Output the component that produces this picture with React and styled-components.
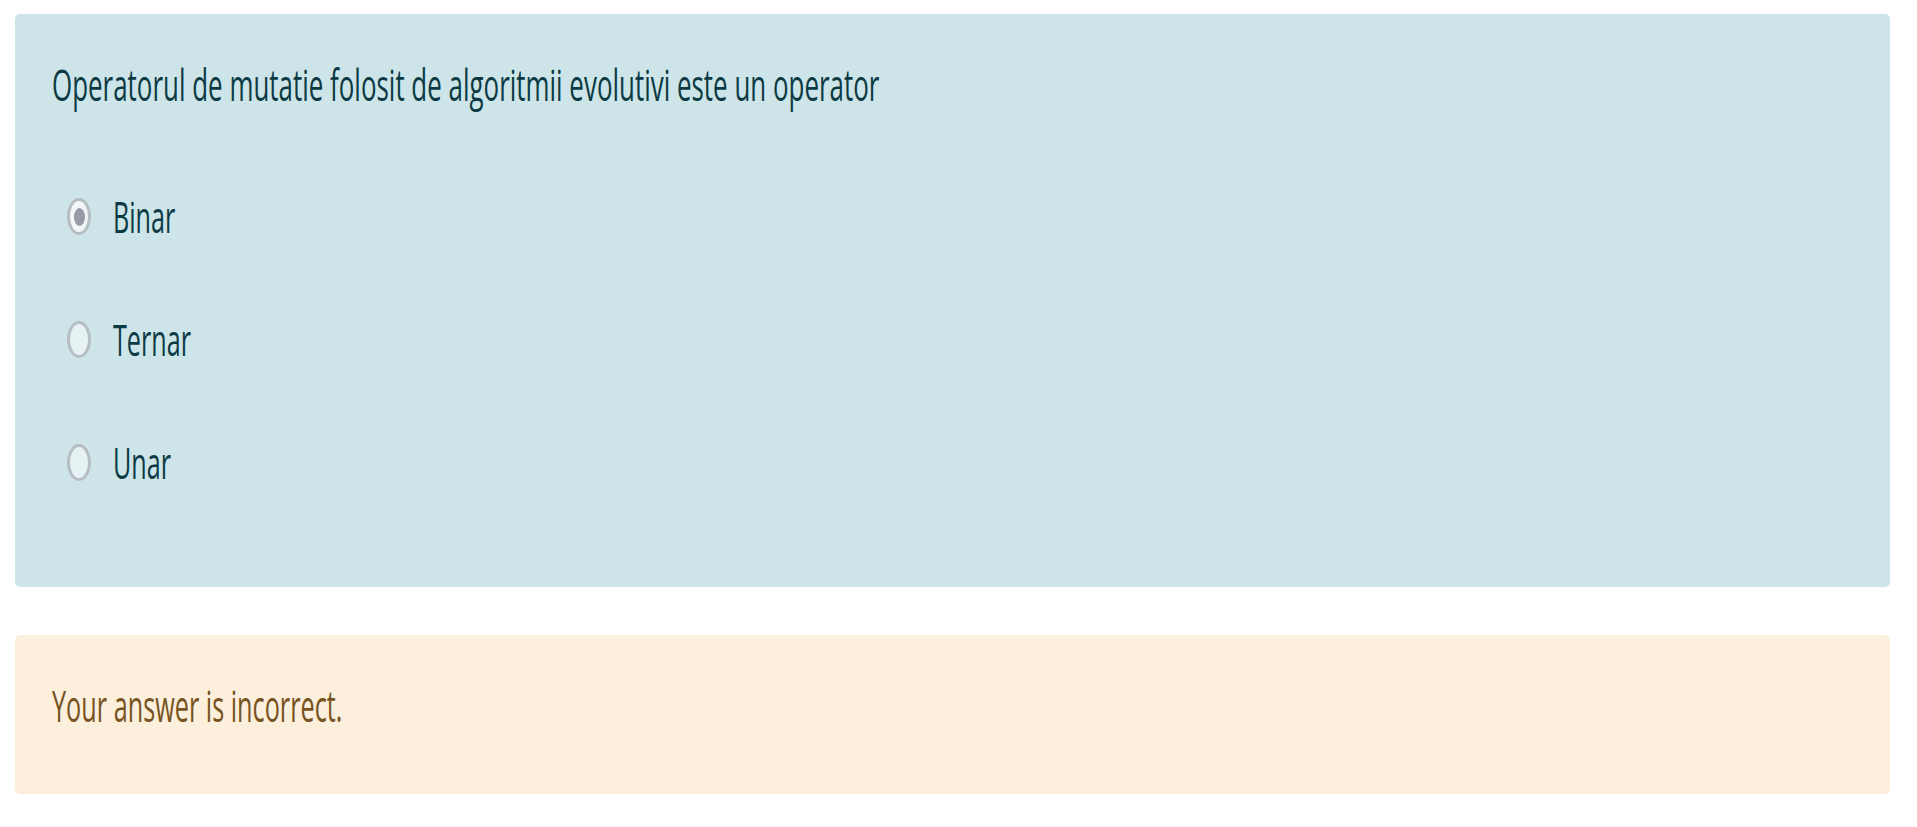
import React from "react";
import styled, { createGlobalStyle } from "styled-components";

const GlobalStyle = createGlobalStyle`
    html, body {
        margin: 0;
        padding: 0;
        background: #ffffff;
    }
    body {
        font-family: "Open Sans", "Liberation Sans", sans-serif;
    }
`;

const Page = styled.div`
    display: flex;
    flex-direction: column;
    gap: 48px;
    padding: 14px 27px 0 15px;
`;

const Formulation = styled.div`
    background: #cde5e9;
    border-radius: 5px;
    padding: 49px 37px 103px 37px;
    color: #0c3a44;
`;

const Outcome = styled.div`
    background: #fcefdc;
    border-radius: 5px;
    padding: 49px 37px 67px 37px;
    color: #77531f;
`;

// the screenshot is squeezed sideways, so text is drawn tall and narrowed
const Text = styled.div`
    font-size: 43px;
    line-height: 43px;
    height: 43px;
    white-space: nowrap;
    transform: scaleX(${(p) => p.$sx || 0.6});
    transform-origin: left center;
`;

const Options = styled.div`
    display: flex;
    flex-direction: column;
    gap: 80px;
    margin-top: 89px;
    padding-left: 15px;
`;

const OptionRow = styled.label`
    display: flex;
    align-items: center;
    gap: 22px;
    height: 43px;
`;

const Radio = styled.span`
    box-sizing: border-box;
    width: 24px;
    height: 37px;
    border-radius: 50%;
    border: 3px solid #b7bec3;
    background: ${(p) => (p.$checked ? "#f2f6f7" : "#e6f2f4")};
    display: flex;
    align-items: center;
    justify-content: center;
    flex-shrink: 0;
    &::after {
        content: "";
        display: ${(p) => (p.$checked ? "block" : "none")};
        width: 11px;
        height: 18px;
        border-radius: 50%;
        background: #979ba6;
    }
`;

const options = [
    { label: "Binar", checked: true },
    { label: "Ternar", checked: false },
    { label: "Unar", checked: false },
];

export default function App() {
    return (
        <>
            <GlobalStyle />
            <Page>
                <Formulation>
                    <Text $sx={0.603}>Operatorul de mutatie folosit de algoritmii evolutivi este un operator</Text>
                    <Options>
                        {options.map((o) => (
                            <OptionRow key={o.label}>
                                <Radio $checked={o.checked} />
                                <Text $sx={0.585}>{o.label}</Text>
                            </OptionRow>
                        ))}
                    </Options>
                </Formulation>
                <Outcome>
                    <Text $sx={0.587}>Your answer is incorrect.</Text>
                </Outcome>
            </Page>
        </>
    );
}
